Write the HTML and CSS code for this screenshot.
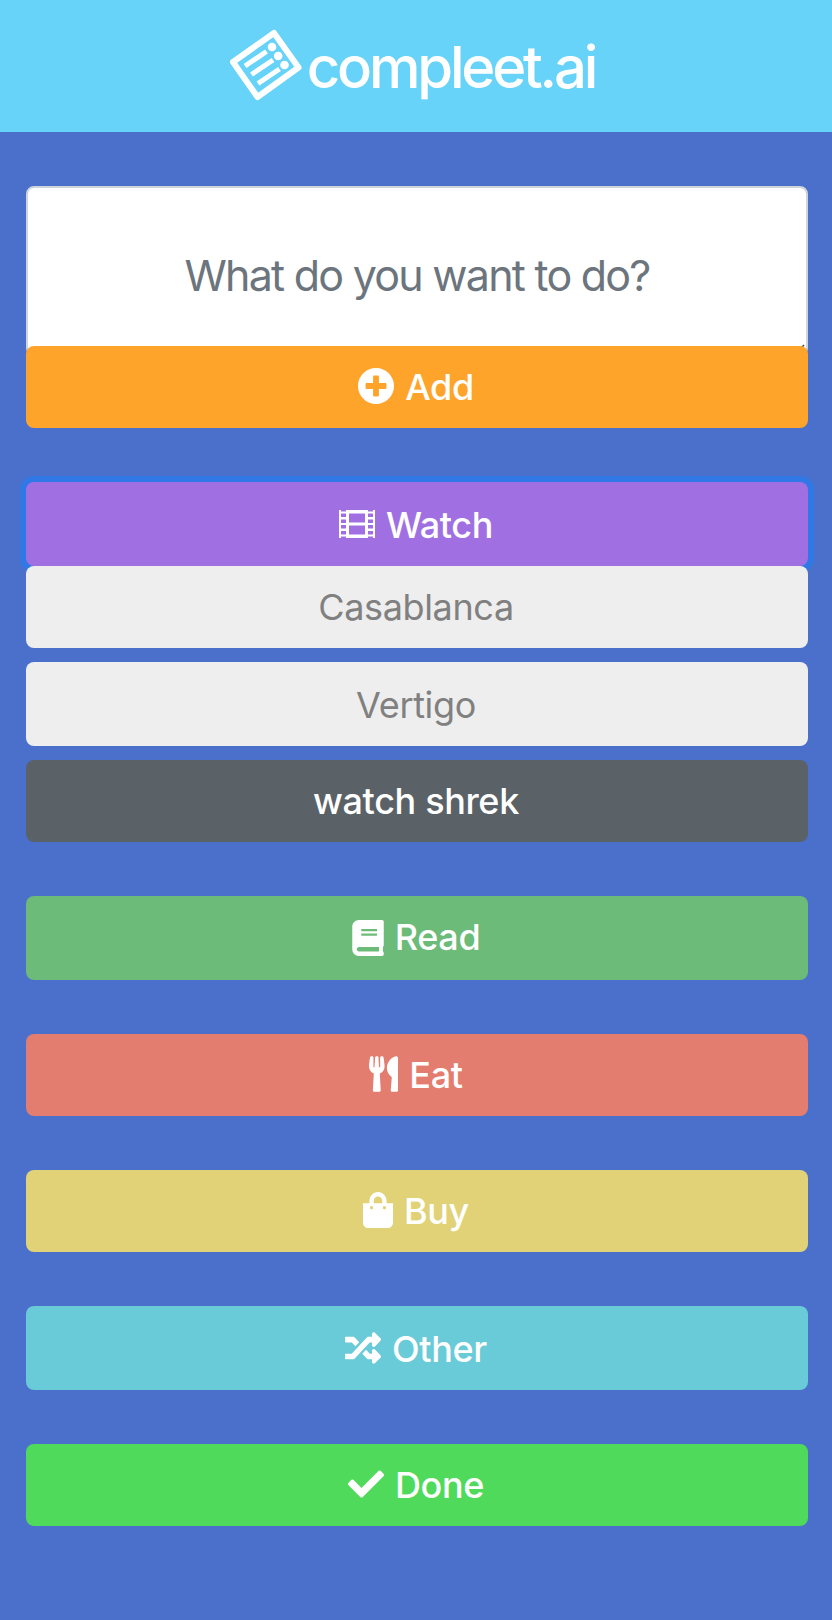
FILE: index.html
```html
<!DOCTYPE html>
<html lang="en">
<head>
<meta charset="utf-8">
<title>compleet.ai</title>
<link rel="stylesheet" href="styles.css">
</head>
<body>
<header class="header">
  <svg class="logo" viewBox="0 0 74 74">
    <g fill="none" stroke="#fff" stroke-linecap="round" stroke-linejoin="round">
      <path stroke-width="6" d="M4 34L45 5L69.500 39.500L28.500 69Z"/>
      <path stroke-width="5" stroke-linecap="butt" d="M16 38L37.500 23.500M22.500 46.500L44 32M29 55.500L50.500 41"/>
    </g>
    <g fill="#fff"><circle cx="43" cy="19" r="4.300"/><circle cx="49.200" cy="28" r="4.300"/><circle cx="55.500" cy="37" r="4.300"/></g>
  </svg>
  <h1 class="brand">compleet.ai</h1>
</header>
<main class="content">
  <form class="composer">
    <div class="field">
      <span class="prompt">What do you want to do?</span>
      <svg class="grip" viewBox="0 0 12 12"><path d="M1 11L11 1M6 11L11 6" stroke="#444" stroke-width="1.500"/></svg>
    </div>
    <button type="button" class="btn add"><svg class="icon raised" viewBox="0 0 496 496"><path transform="translate(-8 -8)" d="M256 8C119 8 8 119 8 256s111 248 248 248 248-111 248-248S393 8 256 8zm144 276c0 6.600-5.400 12-12 12h-92v92c0 6.600-5.400 12-12 12h-56c-6.600 0-12-5.400-12-12v-92h-92c-6.600 0-12-5.400-12-12v-56c0-6.600 5.400-12 12-12h92v-92c0-6.600 5.400-12 12-12h56c6.600 0 12 5.400 12 12v92h92c6.600 0 12 5.400 12 12v56z"/></svg><span class="label">Add</span></button>
  </form>
  <section class="group">
    <button class="btn tall watch"><svg class="icon" viewBox="0 0 36 36"><path fill-rule="evenodd" d="M0 4H2V5.500H7V4H29V5.500H34V4H36V32H34V30.500H29V32H7V30.500H2V32H0ZM2 7.500V11H7V7.500ZM2 13.500V17H7V13.500ZM2 19V22.500H7V19ZM2 25V28.500H7V25ZM29 7.500V11H34V7.500ZM29 13.500V17H34V13.500ZM29 19V22.500H34V19ZM29 25V28.500H34V25ZM10 7.500V16.500H26V7.500ZM10 19.500V28.500H26V19.500Z"/></svg><span class="label lowered">Watch</span></button>
    <ul class="items">
      <li class="item"><span class="label">Casablanca</span></li>
      <li class="item tall"><span class="label lowered">Vertigo</span></li>
      <li class="item dark"><span class="label">watch shrek</span></li>
    </ul>
  </section>
  <button class="btn tall read"><svg class="icon book" viewBox="0 0 448 512"><path d="M448 360V24c0-13.300-10.700-24-24-24H96C43 0 0 43 0 96v320c0 53 43 96 96 96h328c13.300 0 24-10.700 24-24v-16c0-7.500-3.500-14.300-8.900-18.700-4.200-15.400-4.200-59.300 0-74.700 5.400-4.300 8.900-11.100 8.900-18.600zM128 134c0-3.300 2.700-6 6-6h212c3.300 0 6 2.700 6 6v20c0 3.300-2.700 6-6 6H134c-3.300 0-6-2.700-6-6v-20zm0 64c0-3.300 2.700-6 6-6h212c3.300 0 6 2.700 6 6v20c0 3.300-2.700 6-6 6H134c-3.300 0-6-2.700-6-6v-20zm253.400 250H96c-17.700 0-32-14.300-32-32 0-17.600 14.400-32 32-32h285.400c-1.900 17.100-1.900 46.900 0 64z"/></svg><span class="label raised">Read</span></button>
  <button class="btn eat"><svg class="icon utensils raised" viewBox="0 0 416 512"><path d="M207.900 15.200c.8 4.700 16.100 94.500 16.100 128.800 0 52.300-27.800 89.600-68.900 104.600L168 486.700c.7 13.700-10.200 25.300-24 25.300H80c-13.700 0-24.700-11.500-24-25.300l12.900-238.100C27.700 233.600 0 196.200 0 144 0 109.600 15.300 19.900 16.100 15.200 19.300-5.100 61.400-5.400 64 16.300v141.200c1.300 3.400 15.100 3.200 16 0 1.400-25.300 7.900-139.200 8-141.800 3.300-20.800 44.700-20.800 47.900 0 .2 2.700 6.600 116.500 8 141.800.9 3.200 14.800 3.400 16 0V16.300c2.600-21.600 44.800-21.400 48-1.100zm119.200 285.700l-15 185.100c-1.200 14 9.900 26 23.900 26h56c13.300 0 24-10.700 24-24V24c0-13.200-10.700-24-24-24-82.500 0-221.400 178.500-64.900 300.900z"/></svg><span class="label">Eat</span></button>
  <button class="btn buy"><svg class="icon bag raised" viewBox="0 0 448 512" preserveAspectRatio="none"><path d="M352 160v-32C352 57.420 294.579 0 224 0 153.420 0 96 57.420 96 128v32H0v272c0 44.183 35.817 80 80 80h288c44.183 0 80-35.817 80-80V160h-96zm-192-32c0-35.290 28.710-64 64-64s64 28.710 64 64v32H160v-32zm160 120c-13.255 0-24-10.745-24-24s10.745-24 24-24 24 10.745 24 24-10.745 24-24 24zm-192 0c-13.255 0-24-10.745-24-24s10.745-24 24-24 24 10.745 24 24-10.745 24-24 24z"/></svg><span class="label">Buy</span></button>
  <button class="btn tall other"><svg class="icon" viewBox="0 0 512 512"><path d="M504.971 359.029c9.373 9.373 9.373 24.569 0 33.941l-80 79.984c-15.010 15.010-40.971 4.490-40.971-16.971V416h-58.785a12.004 12.004 0 0 1-8.773-3.812l-70.556-75.596 53.333-57.143L352 336h32v-39.981c0-21.438 25.943-31.998 40.971-16.971l80 79.981zM12 176h84l52.781 56.551 53.333-57.143-70.556-75.596A11.999 11.999 0 0 0 122.785 96H12c-6.627 0-12 5.373-12 12v56c0 6.627 5.373 12 12 12zm372 0v39.984c0 21.460 25.961 31.980 40.971 16.971l80-79.984c9.373-9.373 9.373-24.569 0-33.941l-80-79.981C409.943 24.021 384 34.582 384 56.019V96h-58.785a12.004 12.004 0 0 0-8.773 3.812L96 336H12c-6.627 0-12 5.373-12 12v56c0 6.627 5.373 12 12 12h110.785c3.326 0 6.503-1.381 8.773-3.812L352 176h32z"/></svg><span class="label lowered">Other</span></button>
  <button class="btn done"><svg class="icon raised" viewBox="0 0 512 512"><path d="M173.898 439.404l-166.400-166.400c-9.997-9.997-9.997-26.206 0-36.204l36.203-36.204c9.997-9.998 26.207-9.998 36.204 0L192 312.690 432.095 72.596c9.997-9.997 26.207-9.997 36.204 0l36.203 36.204c9.997 9.997 9.997 26.206 0 36.204l-294.400 294.401c-9.998 9.997-26.207 9.997-36.204-.001z"/></svg><span class="label">Done</span></button>
</main>
</body>
</html>
```
FILE: styles.css
```css
* { box-sizing: border-box; }
body {
  margin: 0;
  min-height: 1620px;
  background: #4a70cb;
  font-family: Inter, "Liberation Sans", sans-serif;
}
.header {
  display: flex;
  justify-content: center;
  height: 132px;
  padding: 28px 8px 0 0;
  background: #67d3f9;
}
.logo { width: 74px; height: 74px; flex: none; }
.brand {
  margin: 4px 0 0 4px;
  color: #fff;
  font-size: 58px;
  font-weight: 500;
  line-height: 70px;
  letter-spacing: -3.200px;
}
.content {
  display: flex;
  flex-direction: column;
  gap: 54px;
  padding: 54px 24px 0 26px;
}
.composer { margin: 0; }
.field {
  position: relative;
  height: 170px;
  padding-top: 60px;
  border: 2px solid #ced4da;
  border-radius: 8px;
  background: #fff;
  text-align: center;
}
.prompt {
  color: #6c757d;
  font-size: 43px;
  line-height: 54px;
  letter-spacing: -1.750px;
}
.grip { position: absolute; right: 1px; bottom: -2px; width: 12px; height: 12px; }
.btn, .item {
  display: flex;
  align-items: center;
  justify-content: center;
  width: 100%;
  height: 82px;
  padding: 0;
  border: 0;
  border-radius: 8px;
  color: #fff;
  font: 500 36px/44px Inter, "Liberation Sans", sans-serif;
  letter-spacing: -0.350px;
}
.tall { height: 84px; }
.btn { gap: 11px; padding-right: 2px; }
.icon { width: 36px; height: 36px; fill: currentColor; flex: none; }
.book { width: 32px; }
.bag { width: 30px; }
.utensils { width: 29px; }
.raised { margin-bottom: 2px; }
.lowered { margin-top: 2px; }
.add { position: relative; margin-top: -10px; background: #ffa42a; }
.watch { background: #a070e3; box-shadow: 0 0 0 6px #2f78e5; }
.read { background: #6cbb78; }
.eat { background: #e27d6f; }
.buy { background: #e1d278; }
.other { background: #69cad8; }
.done { background: #50da5b; }
.items {
  position: relative;
  display: flex;
  flex-direction: column;
  gap: 14px;
  margin: 0;
  padding: 0;
  list-style: none;
}
.item { padding-right: 2px; background: #eee; color: #808080; font-weight: 400; }
.item.dark { background: #5a6268; color: #fff; font-weight: 500; }
```
